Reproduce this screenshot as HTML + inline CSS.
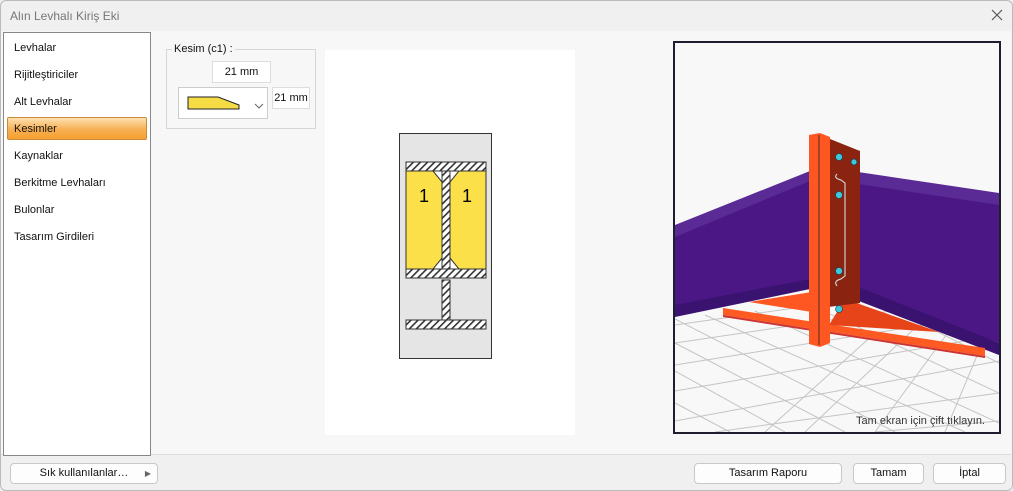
<!DOCTYPE html>
<html><head><meta charset="utf-8"><style>
*{box-sizing:border-box;margin:0;padding:0}
body{width:1013px;height:491px;background:#f0f0f0;font-family:"Liberation Sans",sans-serif;font-size:12px;color:#111;position:relative;overflow:hidden}
.win{position:absolute;left:0;top:0;width:1013px;height:491px;border:1px solid #bbb;border-radius:6px;background:#f0f0f0}
.title{position:absolute;left:10px;top:9px;font-size:12px;color:#777}
.close{position:absolute;right:11px;top:5px;font-size:15px;color:#555;font-weight:normal}
.main{position:absolute;left:1px;top:31px;width:1010px;height:424px;background:#f7f7f7;border-bottom:1px solid #ddd}
.list{position:absolute;left:3px;top:32px;width:148px;height:424px;background:#fff;border:1px solid #888}
.item{position:absolute;left:10px;font-size:11px}
.sel{position:absolute;left:3px;top:84px;width:140px;height:23px;border:1px solid #c98a3a;border-radius:2px;background:linear-gradient(#fde0b0,#f7b052 55%,#f5a030)}
.btn{position:absolute;height:21px;border:1px solid #c8c8c8;border-radius:4px;background:#fdfdfd;font-size:11px;text-align:center;line-height:19px}
.grp{position:absolute;left:166px;top:49px;width:150px;height:80px;border:1px solid #d6d6d6}
.inp{position:absolute;background:#fff;border:1px solid #ddd;font-size:11px;text-align:center}
</style></head><body>
<div class="win"></div>
<div class="title">Alın Levhalı Kiriş Eki</div>
<svg class="close" width="12" height="12" style="position:absolute;left:991px;top:9px"><path d="M1 1L11 11M11 1L1 11" stroke="#555" stroke-width="1.2"/></svg>
<div class="main"></div>
<div class="list">
<div class="sel"></div>
<div class="item" style="top:9px">Levhalar</div>
<div class="item" style="top:36px">Rijitleştiriciler</div>
<div class="item" style="top:63px">Alt Levhalar</div>
<div class="item" style="top:90px">Kesimler</div>
<div class="item" style="top:117px">Kaynaklar</div>
<div class="item" style="top:144px">Berkitme Levhaları</div>
<div class="item" style="top:171px">Bulonlar</div>
<div class="item" style="top:198px">Tasarım Girdileri</div>
</div>
<div class="grp"></div>
<div style="position:absolute;left:172px;top:43px;background:#f7f7f7;padding:0 2px;font-size:11px">Kesim (c1) :</div>
<div class="inp" style="left:212px;top:61px;width:59px;height:22px;line-height:20px">21 mm</div>
<div class="inp" style="left:178px;top:87px;width:90px;height:32px;border-color:#ccc">
<svg width="90" height="32" style="position:absolute;left:0;top:0"><polygon points="9,9 39,9 60,17 60,21 9,21" fill="#f5dc45" stroke="#222" stroke-width="1"/><path d="M76 16 l4 4 l4 -4" fill="none" stroke="#666"/></svg></div>
<div class="inp" style="left:272px;top:87px;width:38px;height:22px;line-height:20px">21 mm</div>
<div style="position:absolute;left:325px;top:50px;width:250px;height:385px;background:#fff"></div>
<svg style="position:absolute;left:399px;top:133px" width="93" height="226">
<defs><pattern id="h" width="5" height="5" patternUnits="userSpaceOnUse" patternTransform="rotate(45)"><rect width="5" height="5" fill="#fff"/><rect width="1.6" height="5" fill="#333"/></pattern></defs>
<rect x="0.5" y="0.5" width="92" height="225" fill="#e5e5e5" stroke="#333"/>
<rect x="7" y="29" width="80" height="116" fill="#fbe04a" stroke="#333"/>
<polygon points="34,38 60,38 51,49 43,49" fill="#fff" stroke="#333"/>
<polygon points="34,136 60,136 51,125 43,125" fill="#fff" stroke="#333"/>
<rect x="7" y="29" width="80" height="9" fill="url(#h)" stroke="#333"/>
<rect x="7" y="136" width="80" height="9" fill="url(#h)" stroke="#333"/>
<rect x="43" y="38" width="8" height="98" fill="url(#h)" stroke="#333"/>
<text x="20" y="69" font-size="18" font-family="Liberation Sans">1</text><text x="63" y="69" font-size="18" font-family="Liberation Sans">1</text>
<rect x="43" y="147" width="8" height="40" fill="url(#h)" stroke="#333"/>
<rect x="7" y="187" width="80" height="9" fill="url(#h)" stroke="#333"/>
</svg>
<div style="position:absolute;left:673px;top:41px;width:328px;height:393px;border:2px solid #1e1e30;background:#f8f8f8;overflow:hidden">
<svg width="324" height="389" style="position:absolute;left:0;top:0">
<g stroke="#c4c4c4" stroke-width="1" fill="none">
<path d="M0 282 L324 236 M0 300 L324 252 M0 322 L324 270 M0 348 L324 292 M0 378 L324 318 M40 389 L324 350 M200 389 L324 378"/>
<path d="M0 276 L220 389 M30 272 L290 389 M80 268 L324 380 M140 264 L324 350 M210 262 L324 320 M0 300 L170 389 M0 328 L110 389 M0 360 L55 389"/>
<path d="M320 270 L270 389 M280 280 L200 389 M240 285 L130 389 M200 290 L90 389"/>
</g>
<polygon points="0,186 135,132 135,242 0,266" fill="#4a1785"/>
<polygon points="0,182 135,128 135,138 0,194" fill="#5a2a95"/>
<polygon points="0,262 135,236 135,246 0,274" fill="#3a1270"/>
<polygon points="163,130 324,156 324,300 163,240" fill="#4a1785"/>
<polygon points="163,126 324,150 324,162 163,138" fill="#5a2a95"/>
<polygon points="163,236 324,300 324,312 163,250" fill="#3a1270"/>
<polygon points="74,259 137,249 137,269" fill="#ff5722"/>
<polygon points="48,265 310,305 310,313 48,272" fill="#ff5a22"/>
<polygon points="48,272 310,313 310,315 48,274" fill="#c33"/>
<polygon points="170,256 264,289 154,282" fill="#e8441a"/>
<polygon points="145,92 185,108 185,260 145,265" fill="#8a2410"/>
<polygon points="134,92 145,90 155,94 155,300 145,304 134,301" fill="#ff5722"/>
<line x1="144" y1="92" x2="144" y2="302" stroke="#222" stroke-width="0.8"/>
<path d="M162 131 Q158 135 166 137 L170 140 L170 233 L166 236 Q158 238 162 243" fill="none" stroke="#ccc" stroke-width="1.2"/>
<g fill="#3cc8d8" stroke="#135" stroke-width="0.6">
<circle cx="164" cy="114" r="3.5"/><circle cx="179" cy="119" r="3"/><circle cx="164" cy="152" r="3.5"/><circle cx="164" cy="228" r="3.5"/><circle cx="164" cy="266" r="3.5"/></g>
</svg>
<div style="position:absolute;right:14px;bottom:5px;font-size:11px;color:#333">Tam ekran için çift tıklayın.</div>
</div>
<div class="btn" style="left:10px;top:463px;width:148px">Sık kullanılanlar…<span style="position:absolute;right:6px;font-size:8px;color:#666">▶</span></div>
<div class="btn" style="left:694px;top:463px;width:148px">Tasarım Raporu</div>
<div class="btn" style="left:853px;top:463px;width:71px">Tamam</div>
<div class="btn" style="left:933px;top:463px;width:73px">İptal</div>
</body></html>
